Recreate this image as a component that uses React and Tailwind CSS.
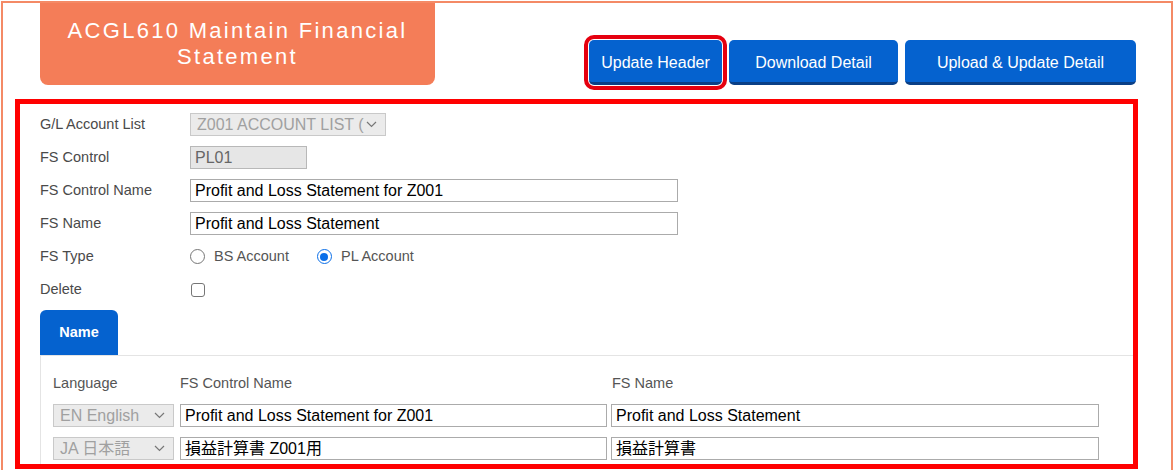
import React from "react";

const font = { fontFamily: '"Liberation Sans", Arial, "Noto Sans CJK JP", sans-serif' };

const Chevron = () => (
  <svg width="11" height="7" viewBox="0 0 11 7" className="shrink-0">
    <path d="M1 1l4.5 4.5L10 1" fill="none" stroke="#777" strokeWidth="1.2" />
  </svg>
);

const FakeSelect = ({ text, className }) => (
  <div
    className={
      "flex items-center h-[23px] bg-[#ebebeb] border border-[#c9c9c9] pl-[6px] pr-[8px] text-[16px] text-[#a0a0a0] overflow-hidden " +
      className
    }
  >
    <span className="flex-1 whitespace-nowrap">{text}</span>
    <Chevron />
  </div>
);

const TextBox = ({ value, className }) => (
  <div
    className={
      "flex items-center h-[23px] bg-white border border-[#ababab] px-[4px] text-[16px] text-black whitespace-nowrap overflow-hidden " +
      className
    }
  >
    {value}
  </div>
);

const Row = ({ label, children }) => (
  <div className="flex items-center h-[33px]">
    <div className="w-[150px] text-[14.5px] text-[#4a4a4a]">{label}</div>
    {children}
  </div>
);

const Radio = ({ checked, label }) => (
  <label className="flex items-center gap-[9px] text-[14.5px] text-[#555]">
    {checked ? (
      <span className="w-[15px] h-[15px] rounded-full border-[1.5px] border-[#0b6fe8] flex items-center justify-center">
        <span className="w-[8px] h-[8px] rounded-full bg-[#0b6fe8]" />
      </span>
    ) : (
      <span className="w-[15px] h-[15px] rounded-full border border-[#767676] bg-white" />
    )}
    {label}
  </label>
);

export default function App() {
  return (
    <div style={font} className="bg-white">
      <div className="ml-[1px] mt-[1px] w-[1172px] min-h-[480px] border-2 border-[#f48a66] border-b-0">
        <div className="flex items-start">
          <div className="ml-[37px] w-[395px] h-[82px] bg-[#f47d58] rounded-b-[8px] pt-[15px] text-center text-white text-[22px] leading-[26px] tracking-[2.3px]">
            ACGL610 Maintain Financial
            <br />
            Statement
          </div>
          <div className="ml-auto mr-[35px] mt-[37px] flex gap-[7px]">
            <button className="w-[133px] h-[45px] pt-[4px] rounded-[5px] bg-[#0562cf] border-b-[3px] border-[#0a3f86] text-white text-[16px] outline-[4px] outline-[#e5000f] outline-offset-[1px]">
              Update Header
            </button>
            <button className="w-[169px] h-[45px] pt-[4px] rounded-[5px] bg-[#0562cf] border-b-[3px] border-[#0a3f86] text-white text-[16px]">
              Download Detail
            </button>
            <button className="w-[231px] h-[45px] pt-[4px] rounded-[5px] bg-[#0562cf] border-b-[3px] border-[#0a3f86] text-white text-[16px]">
              Upload &amp; Update Detail
            </button>
          </div>
        </div>

        <div className="ml-[12px] mt-[14px] w-[1123px] border-[5px] border-[#ff0000] pl-[20px] pt-[4px] pb-0">
          <Row label="G/L Account List">
            <FakeSelect text="Z001 ACCOUNT LIST (" className="w-[196px]" />
          </Row>
          <Row label="FS Control">
            <div className="flex items-center h-[23px] w-[117px] bg-[#e6e6e6] border border-[#b8b8b8] px-[4px] text-[16px] text-[#666]">
              PL01
            </div>
          </Row>
          <Row label="FS Control Name">
            <TextBox value="Profit and Loss Statement for Z001" className="w-[488px]" />
          </Row>
          <Row label="FS Name">
            <TextBox value="Profit and Loss Statement" className="w-[488px]" />
          </Row>
          <Row label="FS Type">
            <div className="flex items-center gap-[28px]">
              <Radio label="BS Account" />
              <Radio checked label="PL Account" />
            </div>
          </Row>
          <Row label="Delete">
            <span className="ml-[1px] w-[14px] h-[14px] rounded-[3px] border border-[#767676] bg-white" />
          </Row>

          <div className="mt-[4px] w-[78px] h-[45px] rounded-t-[6px] bg-[#0562cf] flex items-center justify-center text-white text-[14.5px] font-bold">
            Name
          </div>
          <div className="border-t border-l border-[#e4e4e4] pl-[12px] pt-[17px] pb-[4px]">
            <div className="flex text-[14.5px] text-[#555] leading-[20px]">
              <div className="w-[127px]">Language</div>
              <div className="w-[432px]">FS Control Name</div>
              <div>FS Name</div>
            </div>
            <div className="mt-[11px] flex flex-col gap-[10px]">
              <div className="flex">
                <FakeSelect text="EN English" className="w-[121px]" />
                <TextBox value="Profit and Loss Statement for Z001" className="ml-[6px] w-[427px]" />
                <TextBox value="Profit and Loss Statement" className="ml-[4px] w-[488px]" />
              </div>
              <div className="flex">
                <FakeSelect text="JA 日本語" className="w-[121px]" />
                <TextBox value="損益計算書 Z001用" className="ml-[6px] w-[427px]" />
                <TextBox value="損益計算書" className="ml-[4px] w-[488px]" />
              </div>
            </div>
          </div>
        </div>
      </div>
    </div>
  );
}
